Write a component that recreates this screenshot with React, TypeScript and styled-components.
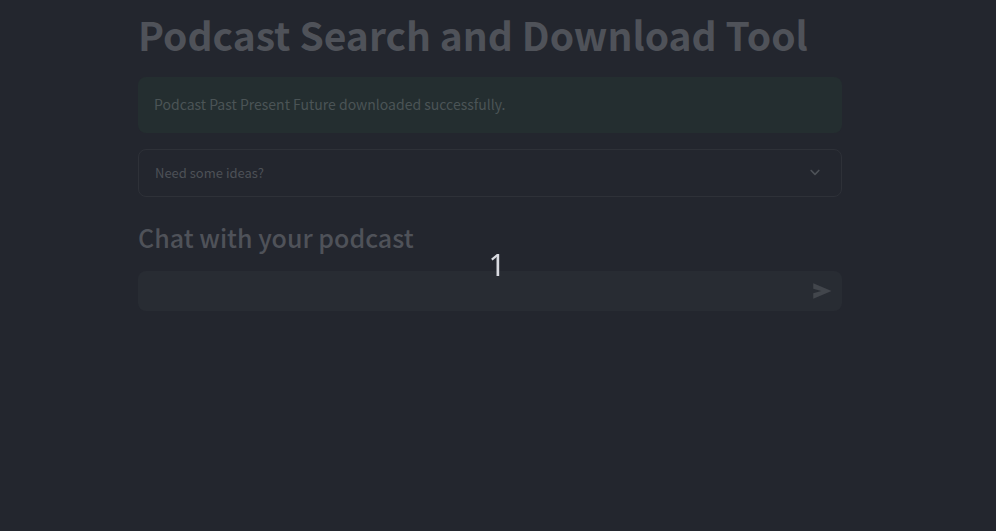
import React, { useState } from "react";
import styled, { createGlobalStyle } from "styled-components";

const GlobalStyle = createGlobalStyle`
  *, *::before, *::after {
    box-sizing: border-box;
  }
  body {
    margin: 0;
    background: #23262e;
    color: #4d5157;
    font-family: "Noto Sans CJK SC", "Noto Sans", sans-serif;
    font-size: 14px;
  }
`;

const Page = styled.div`
  min-height: 100vh;
  padding: 8px 16px 16px 0;
`;

const Main = styled.main`
  display: flex;
  flex-direction: column;
  max-width: 736px;
  margin: 0 auto;
  padding: 0 16px;
`;

const Title = styled.h1`
  margin: 0 0 16px;
  font-size: 39px;
  font-weight: 700;
  line-height: 53px;
  color: #4f5259;
`;

const Alert = styled.div`
  margin-bottom: 16px;
  padding: 15px 16px 17px;
  border-radius: 8px;
  background: #242e30;
  color: #4b5456;
  line-height: 24px;
`;

const Expander = styled.details`
  border: 1px solid #2e3138;
  border-radius: 8px;
`;

const ExpanderSummary = styled.summary`
  display: flex;
  align-items: center;
  justify-content: space-between;
  padding: 12px 16px;
  font-size: 13px;
  line-height: 22px;
  cursor: pointer;
  list-style: none;
`;

const Heading = styled.h2`
  margin: 24px 0 18px;
  font-size: 25px;
  font-weight: 500;
  line-height: 32px;
  color: #4f5259;
`;

const ChatForm = styled.form`
  display: flex;
  align-items: stretch;
  height: 40px;
  border-radius: 8px;
  background: #282c33;
`;

const ChatInput = styled.input`
  flex: 1;
  min-width: 0;
  padding: 8px 16px;
  border: 0;
  outline: 0;
  background: transparent;
  color: inherit;
  font: inherit;
`;

const SendButton = styled.button`
  display: flex;
  align-items: center;
  justify-content: center;
  width: 40px;
  padding: 0;
  border: 0;
  background: transparent;
  color: #42464c;
  cursor: pointer;
`;

const CountOverlay = styled.div`
  position: fixed;
  inset: 0;
  display: flex;
  align-items: center;
  justify-content: center;
  padding: 0 2px 2px 0;
  pointer-events: none;
  color: #d8dae0;
  font-family: "Noto Sans", sans-serif;
  font-size: 30px;
  line-height: 40px;
`;

function ChevronIcon() {
  return (
    <svg width="20" height="20" viewBox="0 0 24 24" fill="currentColor" aria-hidden="true">
      <path d="M8.12 8.29 12 12.17l3.88-3.88a.996.996 0 1 1 1.41 1.41l-4.59 4.59a.996.996 0 0 1-1.41 0L6.7 9.7a.996.996 0 0 1 0-1.41c.39-.38 1.03-.39 1.42 0z" />
    </svg>
  );
}

function SendIcon() {
  return (
    <svg width="20" height="20" viewBox="0 0 8 8" fill="currentColor" aria-hidden="true">
      <path d="M0.5 0.9v2.2l3.2.9L.5 4.9v2.2L7.8 4z" />
    </svg>
  );
}

export default function App() {
  const [message, setMessage] = useState("");
  return (
    <>
      <GlobalStyle />
      <Page>
        <Main>
          <Title>Podcast Search and Download Tool</Title>
          <Alert role="status">Podcast Past Present Future downloaded successfully.</Alert>
          <Expander>
            <ExpanderSummary>
              Need some ideas?
              <ChevronIcon />
            </ExpanderSummary>
          </Expander>
          <Heading>Chat with your podcast</Heading>
          <ChatForm onSubmit={(event) => { event.preventDefault(); setMessage(""); }}>
            <ChatInput
              aria-label="Chat message"
              value={message}
              onChange={(event) => setMessage(event.target.value)}
            />
            <SendButton type="submit" aria-label="Send message">
              <SendIcon />
            </SendButton>
          </ChatForm>
        </Main>
      </Page>
      <CountOverlay>1</CountOverlay>
    </>
  );
}
